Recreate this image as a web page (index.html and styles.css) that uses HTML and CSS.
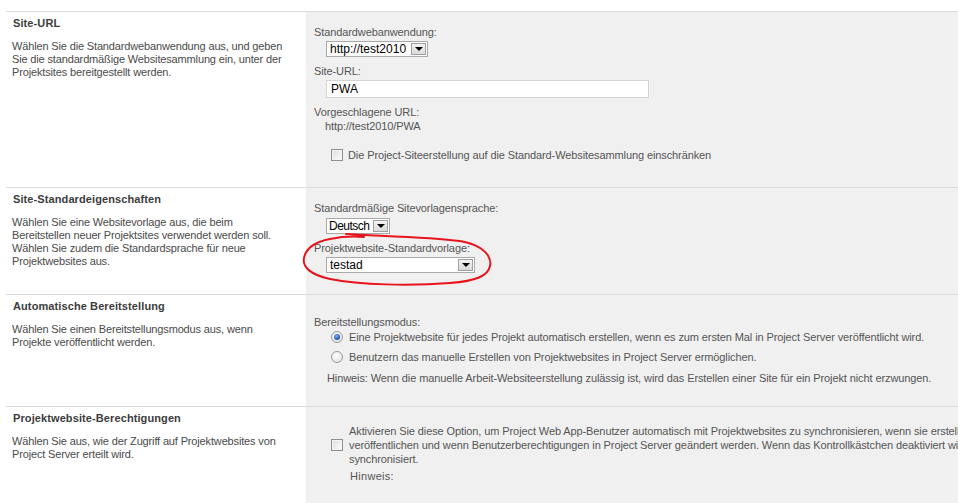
FILE: index.html
```html
<!DOCTYPE html>
<html lang="de">
<head>
<meta charset="utf-8">
<title>Projektsite-Bereitstellungseinstellungen</title>
<link rel="stylesheet" href="styles.css">
</head>
<body>
<div class="page">
  <div class="top-gap"></div>

  <section class="row row-url">
    <div class="info">
      <h3 class="title">Site-URL</h3>
      <p class="desc">Wählen Sie die Standardwebanwendung aus, und geben<br>Sie die standardmäßige Websitesammlung ein, unter der<br>Projektsites bereitgestellt werden.</p>
    </div>
    <div class="panel">
      <div class="label first">Standardwebanwendung:</div>
      <div class="select sel-app"><span class="sel-text">http://test2010</span><span class="sel-btn"><span class="tri"></span></span></div>
      <div class="label">Site-URL:</div>
      <div class="input"><span class="sel-text">PWA</span></div>
      <div class="label">Vorgeschlagene URL:</div>
      <div class="url">http://test2010/PWA</div>
      <div class="check-row restrict"><span class="checkbox"></span><span class="check-text">Die Project-Siteerstellung auf die Standard-Websitesammlung einschränken</span></div>
    </div>
  </section>

  <section class="row row-defaults">
    <div class="info">
      <h3 class="title">Site-Standardeigenschaften</h3>
      <p class="desc">Wählen Sie eine Websitevorlage aus, die beim<br>Bereitstellen neuer Projektsites verwendet werden soll.<br>Wählen Sie zudem die Standardsprache für neue<br>Projektwebsites aus.</p>
    </div>
    <div class="panel">
      <div class="label first">Standardmäßige Sitevorlagensprache:</div>
      <div class="select sel-lang"><span class="sel-text">Deutsch</span><span class="sel-btn"><span class="tri"></span></span></div>
      <div class="label">Projektwebsite-Standardvorlage:</div>
      <div class="select sel-tpl"><span class="sel-text">testad</span><span class="sel-btn"><span class="tri"></span></span></div>
    </div>
  </section>

  <section class="row row-auto">
    <div class="info">
      <h3 class="title">Automatische Bereitstellung</h3>
      <p class="desc">Wählen Sie einen Bereitstellungsmodus aus, wenn<br>Projekte veröffentlicht werden.</p>
    </div>
    <div class="panel">
      <div class="label mode">Bereitstellungsmodus:</div>
      <div class="radio-row"><span class="radio checked"></span><span class="check-text">Eine Projektwebsite für jedes Projekt automatisch erstellen, wenn es zum ersten Mal in Project Server veröffentlicht wird.</span></div>
      <div class="radio-row second"><span class="radio"></span><span class="check-text">Benutzern das manuelle Erstellen von Projektwebsites in Project Server ermöglichen.</span></div>
      <div class="hint">Hinweis: Wenn die manuelle Arbeit-Websiteerstellung zulässig ist, wird das Erstellen einer Site für ein Projekt nicht erzwungen.</div>
    </div>
  </section>

  <section class="row row-perm">
    <div class="info">
      <h3 class="title">Projektwebsite-Berechtigungen</h3>
      <p class="desc">Wählen Sie aus, wie der Zugriff auf Projektwebsites von<br>Project Server erteilt wird.</p>
    </div>
    <div class="panel">
      <div class="check-row sync"><span class="checkbox"></span><span class="check-text multi">Aktivieren Sie diese Option, um Project Web App-Benutzer automatisch mit Projektwebsites zu synchronisieren, wenn sie erstellt werden, wenn Sie Projekte<br>veröffentlichen und wenn Benutzerberechtigungen in Project Server geändert werden. Wenn das Kontrollkästchen deaktiviert wird, werden Benutzer nicht<br>synchronisiert.</span></div>
      <div class="hint2">Hinweis:</div>
    </div>
  </section>

  <svg class="annotation" width="200" height="64" viewBox="0 0 200 64" aria-hidden="true">
    <path d="M46 6 C80 8 130 9 160 13 C184 17 192 29 190 38 C188 48 176 53 150 55 C110 58 60 57 30 51 C11 47 2 39 4 30 C6 20 14 14 30 11 C40 9 52 8 64 9" fill="none" stroke="#e8141c" stroke-width="2" stroke-linecap="round"/>
  </svg>
</div>
</body>
</html>
```

FILE: styles.css
```css
html, body {
  margin: 0;
  padding: 0;
  background: #ffffff;
}

body {
  width: 958px;
  height: 503px;
  overflow: hidden;
  font-family: "Liberation Sans", Arial, sans-serif;
  font-size: 11px;
  color: #4a4a4a;
}

.page {
  position: relative;
  width: 958px;
}

.top-gap {
  height: 11px;
}

.row {
  display: grid;
  grid-template-columns: 300px 1fr;
  margin-left: 6px;
  border-top: 1px solid #dcdcdc;
}

.row-url { height: 175px; }
.row-defaults { height: 106px; }
.row-auto { height: 111px; }
.row-perm { height: 120px; }

.info {
  padding: 4px 0 0 6px;
  background: #ffffff;
}

.title {
  margin: 0 0 0 1px;
  font-size: 11px;
  line-height: 14px;
  font-weight: bold;
  color: #3c3c3c;
  letter-spacing: 0.1px;
}

.desc {
  margin: 10px 0 0 0;
  line-height: 13px;
  color: #4a4a4a;
  letter-spacing: -0.15px;
}

.panel {
  background: #f0f0f0;
  padding-left: 8px;
  min-width: 0;
  overflow: hidden;
  white-space: nowrap;
  color: #555555;
  letter-spacing: -0.1px;
}

.label {
  line-height: 14px;
  margin-top: 7px;
}

.label.first {
  margin-top: 13px;
}

.label.mode {
  margin-top: 20px;
}

.select {
  display: flex;
  align-items: center;
  justify-content: space-between;
  box-sizing: border-box;
  height: 16px;
  margin: 2px 0 0 12px;
  padding: 0 1px 0 3px;
  background: #ffffff;
  border: 1px solid #a9a9a9;
  color: #000000;
  font-size: 12px;
  letter-spacing: 0;
}

.sel-text {
  overflow: hidden;
}

.sel-app { width: 102px; }
.sel-lang { width: 64px; margin-top: 3px; letter-spacing: -0.5px; padding-left: 2px; }
.sel-tpl { width: 149px; }

.sel-btn {
  flex: none;
  display: flex;
  align-items: center;
  justify-content: center;
  box-sizing: border-box;
  width: 15px;
  height: 12px;
  background: linear-gradient(#f2f2f2, #dadada);
  border: 1px solid #a0a0a0;
}

.tri {
  width: 0;
  height: 0;
  border-left: 4px solid transparent;
  border-right: 4px solid transparent;
  border-top: 4px solid #000000;
}

.input {
  box-sizing: border-box;
  width: 323px;
  height: 18px;
  margin: 2px 0 0 12px;
  padding: 0 4px;
  background: #ffffff;
  border: 1px solid #d4d4d4;
  color: #000000;
  font-size: 12px;
  line-height: 16px;
  letter-spacing: 0;
}

.url {
  line-height: 14px;
  margin-left: 11px;
}

.check-row {
  display: flex;
  align-items: center;
}

.check-row.restrict {
  margin: 15px 0 0 17px;
  line-height: 14px;
}

.checkbox {
  flex: none;
  box-sizing: border-box;
  width: 12px;
  height: 12px;
  border: 1px solid #8e8f8f;
  background: linear-gradient(135deg, #dcdcdc, #ffffff);
  box-shadow: inset 0 0 0 1px #f4f4f4;
}

.check-text {
  margin-left: 5px;
  line-height: 14px;
}

.radio-row {
  display: flex;
  align-items: center;
  margin: 1px 0 0 17px;
}

.radio-row.second {
  margin-top: 6px;
}

.radio {
  flex: none;
  box-sizing: border-box;
  width: 12px;
  height: 12px;
  border-radius: 50%;
  border: 1px solid #9a9a9a;
  background: radial-gradient(circle at 40% 35%, #ffffff, #dedede);
  position: relative;
}

.radio.checked::after {
  content: "";
  position: absolute;
  left: 2px;
  top: 2px;
  width: 6px;
  height: 6px;
  border-radius: 50%;
  background: radial-gradient(circle at 40% 35%, #7fb2ff, #1b4ea8 70%);
}

.radio-row .check-text {
  margin-left: 6px;
}

.hint {
  margin: 7px 0 0 13px;
  line-height: 14px;
}

.check-row.sync {
  margin: 17px 0 0 17px;
}

.check-text.multi {
  margin-left: 6px;
  line-height: 14px;
}

.hint2 {
  margin: 3px 0 0 36px;
  line-height: 14px;
  letter-spacing: 0.3px;
}

.annotation {
  position: absolute;
  left: 300px;
  top: 228px;
  overflow: visible;
  pointer-events: none;
}
```
